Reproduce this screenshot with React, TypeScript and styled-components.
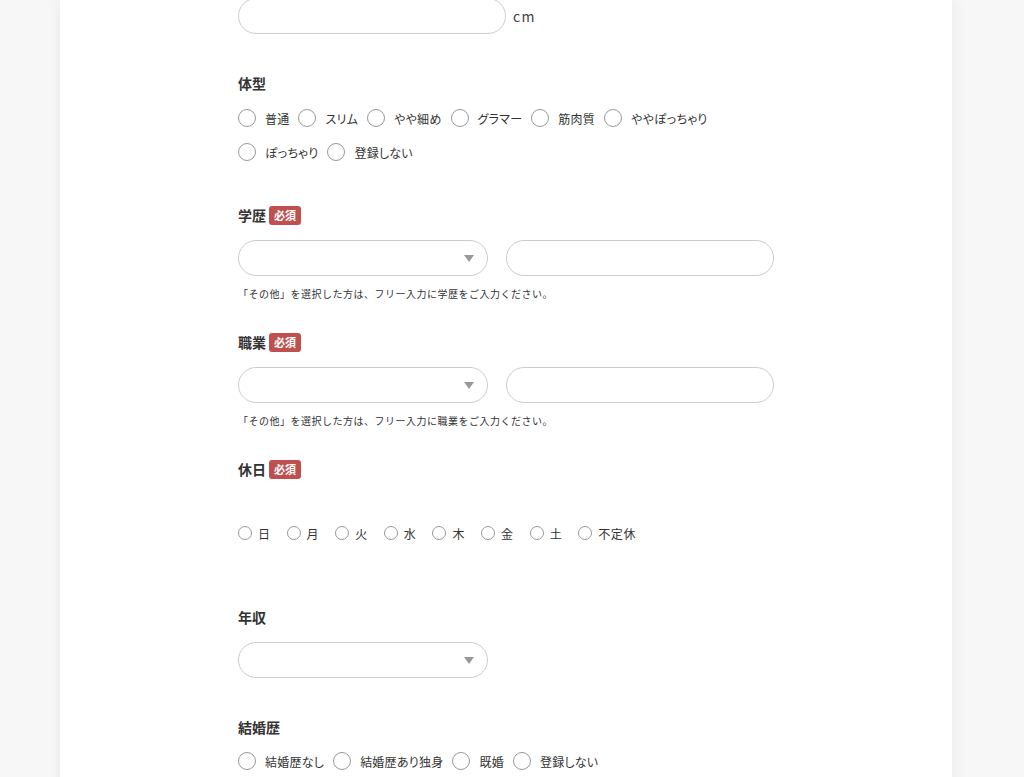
import React from "react";
import styled, { createGlobalStyle } from "styled-components";

const Global = createGlobalStyle`
  html, body { margin: 0; padding: 0; background: #f7f7f7; }
  body {
    font-family: "Noto Sans CJK JP", "Noto Sans", sans-serif;
    color: #333;
    overflow: hidden;
  }
  * { box-sizing: border-box; }
`;

const Card = styled.div`
  margin-left: 60px;
  width: 892px;
  min-height: 900px;
  background: #fff;
  box-shadow: 0 0 16px rgba(0, 0, 0, 0.06);
  padding: 0 178px;
  margin-top: -2px;
`;

const Section = styled.div<{ $mt: number }>`
  margin-top: ${(p) => p.$mt}px;
`;

const Label = styled.div`
  display: flex;
  align-items: center;
  gap: 3px;
  height: 20px;
  font-size: 14px;
  font-weight: 700;
  color: #333;
`;

const Badge = styled.span`
  display: inline-flex;
  align-items: center;
  justify-content: center;
  width: 32px;
  height: 19px;
  border-radius: 3px;
  background: #c0504f;
  color: #fff;
  font-size: 11px;
  font-weight: 700;
  letter-spacing: 0;
`;

const Row = styled.div<{ $mt?: number }>`
  display: flex;
  align-items: center;
  gap: 18px;
  margin-top: ${(p) => p.$mt ?? 0}px;
`;

const TextInput = styled.div<{ $w: number }>`
  width: ${(p) => p.$w}px;
  height: 36px;
  border: 1px solid #ccc;
  border-radius: 18px;
  background: #fff;
`;

const Unit = styled.span`
  font-size: 14px;
  letter-spacing: 0.1em;
  color: #444;
  margin-left: -11px;
`;

const Select = styled.div`
  position: relative;
  width: 250px;
  height: 36px;
  border: 1px solid #ccc;
  border-radius: 18px;
  background: #fff;
  &::after {
    content: "";
    position: absolute;
    right: 13px;
    top: 14px;
    border-left: 5px solid transparent;
    border-right: 5px solid transparent;
    border-top: 7px solid #999;
  }
`;

const Note = styled.div`
  margin-top: 10px;
  font-size: 10px;
  line-height: 16px;
  letter-spacing: 0.05em;
  color: #333;
`;

const RadioGroup = styled.div<{ $mt: number }>`
  display: flex;
  flex-wrap: wrap;
  row-gap: 16px;
  margin-top: ${(p) => p.$mt}px;
`;

const RadioItem = styled.label`
  display: flex;
  align-items: center;
  height: 18px;
  margin-right: 9px;
  font-size: 12px;
  letter-spacing: 0.02em;
  font-feature-settings: "palt";
  color: #333;
`;

const Circle = styled.span<{ $size: number }>`
  display: inline-block;
  width: ${(p) => p.$size}px;
  height: ${(p) => p.$size}px;
  border-radius: 50%;
  border: 1px solid #999;
  background: #fff;
  flex-shrink: 0;
`;

const RadioText = styled.span<{ $gap: number }>`
  margin-left: ${(p) => p.$gap}px;
`;

const DayGroup = styled.div`
  display: flex;
  gap: 16px;
  margin-top: 44px;
`;

const DayItem = styled.label`
  display: flex;
  align-items: center;
  height: 20px;
  font-size: 12px;
  letter-spacing: 0.05em;
  color: #333;
`;

const Radio = ({ label }: { label: string }) => (
  <RadioItem>
    <Circle $size={18} />
    <RadioText $gap={9}>{label}</RadioText>
  </RadioItem>
);

const bodyTypes = ["普通", "スリム", "やや細め", "グラマー", "筋肉質", "ややぽっちゃり", "ぽっちゃり", "登録しない"];
const days = ["日", "月", "火", "水", "木", "金", "土", "不定休"];
const marriage = ["結婚歴なし", "結婚歴あり独身", "既婚", "登録しない"];

export default function App() {
  return (
    <>
      <Global />
      <Card>
        <Row>
          <TextInput $w={268} />
          <Unit>cm</Unit>
        </Row>

        <Section $mt={39}>
          <Label>体型</Label>
          <RadioGroup $mt={16}>
            {bodyTypes.map((t) => (
              <Radio key={t} label={t} />
            ))}
          </RadioGroup>
        </Section>

        <Section $mt={44}>
          <Label>
            学歴<Badge>必須</Badge>
          </Label>
          <Row $mt={15}>
            <Select />
            <TextInput $w={268} />
          </Row>
          <Note>「その他」を選択した方は、フリー入力に学歴をご入力ください。</Note>
        </Section>

        <Section $mt={30}>
          <Label>
            職業<Badge>必須</Badge>
          </Label>
          <Row $mt={15}>
            <Select />
            <TextInput $w={268} />
          </Row>
          <Note>「その他」を選択した方は、フリー入力に職業をご入力ください。</Note>
        </Section>

        <Section $mt={30}>
          <Label>
            休日<Badge>必須</Badge>
          </Label>
          <DayGroup>
            {days.map((d) => (
              <DayItem key={d}>
                <Circle $size={14} />
                <RadioText $gap={6}>{d}</RadioText>
              </DayItem>
            ))}
          </DayGroup>
        </Section>

        <Section $mt={64}>
          <Label>年収</Label>
          <Row $mt={15}>
            <Select />
          </Row>
        </Section>

        <Section $mt={39}>
          <Label>結婚歴</Label>
          <RadioGroup $mt={15}>
            {marriage.map((t) => (
              <Radio key={t} label={t} />
            ))}
          </RadioGroup>
        </Section>
      </Card>
    </>
  );
}
